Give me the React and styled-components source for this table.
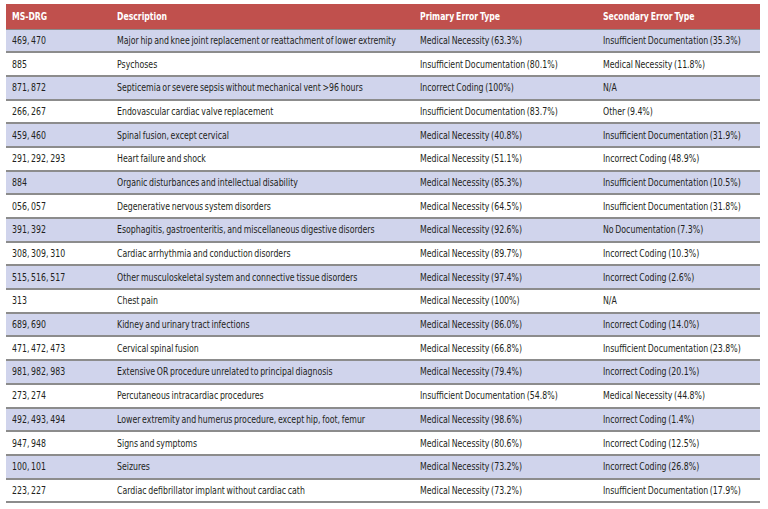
import React from "react";
import styled, { createGlobalStyle } from "styled-components";

const rows = [
  ["469, 470", "Major hip and knee joint replacement or reattachment of lower extremity", "Medical Necessity (63.3%)", "Insufficient Documentation (35.3%)"],
  ["885", "Psychoses", "Insufficient Documentation (80.1%)", "Medical Necessity (11.8%)"],
  ["871, 872", "Septicemia or severe sepsis without mechanical vent >96 hours", "Incorrect Coding (100%)", "N/A"],
  ["266, 267", "Endovascular cardiac valve replacement", "Insufficient Documentation (83.7%)", "Other (9.4%)"],
  ["459, 460", "Spinal fusion, except cervical", "Medical Necessity (40.8%)", "Insufficient Documentation (31.9%)"],
  ["291, 292, 293", "Heart failure and shock", "Medical Necessity (51.1%)", "Incorrect Coding (48.9%)"],
  ["884", "Organic disturbances and intellectual disability", "Medical Necessity (85.3%)", "Insufficient Documentation (10.5%)"],
  ["056, 057", "Degenerative nervous system disorders", "Medical Necessity (64.5%)", "Insufficient Documentation (31.8%)"],
  ["391, 392", "Esophagitis, gastroenteritis, and miscellaneous digestive disorders", "Medical Necessity (92.6%)", "No Documentation (7.3%)"],
  ["308, 309, 310", "Cardiac arrhythmia and conduction disorders", "Medical Necessity (89.7%)", "Incorrect Coding (10.3%)"],
  ["515, 516, 517", "Other musculoskeletal system and connective tissue disorders", "Medical Necessity (97.4%)", "Incorrect Coding (2.6%)"],
  ["313", "Chest pain", "Medical Necessity (100%)", "N/A"],
  ["689, 690", "Kidney and urinary tract infections", "Medical Necessity (86.0%)", "Incorrect Coding (14.0%)"],
  ["471, 472, 473", "Cervical spinal fusion", "Medical Necessity (66.8%)", "Insufficient Documentation (23.8%)"],
  ["981, 982, 983", "Extensive OR procedure unrelated to principal diagnosis", "Medical Necessity (79.4%)", "Incorrect Coding (20.1%)"],
  ["273, 274", "Percutaneous intracardiac procedures", "Insufficient Documentation (54.8%)", "Medical Necessity (44.8%)"],
  ["492, 493, 494", "Lower extremity and humerus procedure, except hip, foot, femur", "Medical Necessity (98.6%)", "Incorrect Coding (1.4%)"],
  ["947, 948", "Signs and symptoms", "Medical Necessity (80.6%)", "Incorrect Coding (12.5%)"],
  ["100, 101", "Seizures", "Medical Necessity (73.2%)", "Incorrect Coding (26.8%)"],
  ["223, 227", "Cardiac defibrillator implant without cardiac cath", "Medical Necessity (73.2%)", "Insufficient Documentation (17.9%)"],
];

const columns = [
  { label: "MS-DRG", w: 105 },
  { label: "Description", w: 303 },
  { label: "Primary Error Type", w: 183 },
  { label: "Secondary Error Type", w: 163 },
];

const GlobalStyle = createGlobalStyle`
  body {
    margin: 0;
    background: #ffffff;
    font-family: "DejaVu Sans Condensed", "Liberation Sans", sans-serif;
  }
`;

const Page = styled.div`
  padding: 4px 8px 0 6px;
`;

const Table = styled.table`
  width: 754px;
  border-collapse: collapse;
  table-layout: fixed;
  font-size: 11px;
  color: #231f20;
`;

const Th = styled.th`
  box-sizing: border-box;
  width: ${(p) => p.$w}px;
  height: 25px;
  padding: 0 6px;
  background: #c0504d;
  color: #fff;
  font-weight: bold;
  font-size: 11px;
  text-align: left;
  white-space: nowrap;
  overflow: hidden;
  border-bottom: 1px solid #8a8a8a;
`;

const Tr = styled.tr`
  background: ${(p) => (p.$shaded ? "#d0d4ec" : "#ffffff")};
  border-bottom: 2px solid #8c8c8c;
`;

const Td = styled.td`
  height: 21.7px;
  padding: 0 6px;
  white-space: nowrap;
  overflow: hidden;
`;

/* narrow the face to match the condensed typeface of the print table */
const Condensed = styled.span`
  display: inline-block;
  word-spacing: -1px;
  transform: scaleX(${(p) => p.$sx || 0.79});
  transform-origin: left center;
`;

export default function App() {
  return (
    <Page>
      <GlobalStyle />
      <Table>
        <thead>
          <tr>
            {columns.map((c) => (
              <Th key={c.label} $w={c.w}>
                <Condensed $sx={0.78}>{c.label}</Condensed>
              </Th>
            ))}
          </tr>
        </thead>
        <tbody>
          {rows.map((r, i) => (
            <Tr key={r[0]} $shaded={i % 2 === 0}>
              {r.map((c, j) => (
                <Td key={j}>
                  <Condensed>{c}</Condensed>
                </Td>
              ))}
            </Tr>
          ))}
        </tbody>
      </Table>
    </Page>
  );
}
